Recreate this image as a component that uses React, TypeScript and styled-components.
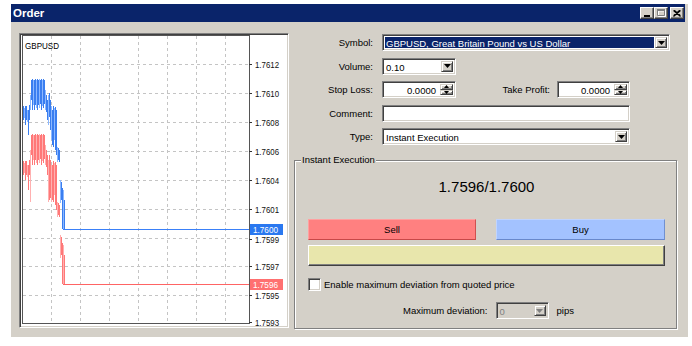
import React from 'react';
import styled, { createGlobalStyle } from 'styled-components';

const GlobalStyle = createGlobalStyle`
  html, body {
    margin: 0;
    padding: 0;
    background: #fff;
  }
  body {
    font-family: "Liberation Sans", Arial, sans-serif;
    font-size: 9.5px;
    color: #000;
  }
`;

// chart data: [top, bottom] per pixel column, starting at x = 23
const askCols: [number, number][] = [
  [106, 120], [108, 118], [106, 125], [106, 120], [110, 122], [110, 135], [105, 120],
  [95, 110], [80, 100], [79, 110], [80, 105], [80, 110], [79, 105], [80, 108],
  [79, 110], [80, 105], [79, 108], [80, 104], [79, 110], [80, 106], [79, 108],
  [80, 104], [90, 110], [95, 112], [100, 120], [95, 125], [93, 117], [100, 130],
  [106, 140], [110, 145], [106, 147], [108, 140], [107, 150], [110, 155], [147, 162],
  [148, 160], [150, 162], [180, 203], [182, 200], [188, 229], [190, 229], [200, 229],
];
const SPREAD = 55;
// bid columns that dip lower than ask + spread
const bidDips: Record<number, [number, number]> = {
  7: [150, 202],
  25: [160, 202],
  26: [155, 200],
  27: [160, 198],
  28: [165, 202],
};

const hGrid = [64.5, 93.5, 122.5, 151.5, 180.5, 209.5, 238.5, 266.5, 295.5];
const vGrid = [51.5, 80.5, 109.5, 138.5, 167.5, 196.5, 225.5];
const axis: [number, string][] = [
  [64.5, '1.7612'], [93.5, '1.7610'], [122.5, '1.7608'], [151.5, '1.7606'],
  [180.5, '1.7604'], [209.5, '1.7601'], [239.5, '1.7599'], [266.5, '1.7597'],
  [295.5, '1.7595'], [322, '1.7593'],
];

const PriceChart = () => (
  <ChartSvg viewBox="21 35 266 291" width={266} height={291}>
    <rect x={21} y={35} width={266} height={291} fill="#fff" />
    {hGrid.map((y) => (
      <line key={'h' + y} x1={23} x2={249} y1={y} y2={y} stroke="#c4c4c4" strokeDasharray="3 3" />
    ))}
    {vGrid.map((x) => (
      <line key={'v' + x} x1={x} x2={x} y1={36} y2={323} stroke="#c4c4c4" strokeDasharray="3 3" />
    ))}
    {askCols.map(([t, b], i) => {
      const [bt, bb] = bidDips[i] || [t + SPREAD, b + SPREAD];
      return (
        <line
          key={'r' + i}
          x1={23.5 + i}
          x2={23.5 + i}
          y1={bt}
          y2={bb}
          stroke={i % 3 === 1 ? '#ffb0b0' : '#ff7878'}
        />
      );
    })}
    {askCols.map(([t, b], i) => (
      <line
        key={'b' + i}
        x1={23.5 + i}
        x2={23.5 + i}
        y1={t}
        y2={b}
        stroke={i % 3 === 1 ? '#8cb8ff' : '#3a7ef0'}
      />
    ))}
    <line x1={63} x2={249} y1={229.5} y2={229.5} stroke="#3a80f8" />
    <line x1={63} x2={249} y1={284.5} y2={284.5} stroke="#ff6464" />
    <rect x={22.5} y={35.5} width={227} height={288} fill="none" stroke="#555" />
    {axis.map(([y, label]) => (
      <g key={label}>
        <line x1={249} x2={252} y1={Math.floor(y) + 0.5} y2={Math.floor(y) + 0.5} stroke="#333" />
        <text x={255} y={y + 3.5} fontSize={9.5} textLength={24} lengthAdjust="spacingAndGlyphs" fill="#111">
          {label}
        </text>
      </g>
    ))}
    <rect x={250} y={224} width={33} height={11} fill="#2a78f0" />
    <text x={253} y={232.5} fontSize={9.5} textLength={25} lengthAdjust="spacingAndGlyphs" fill="#fff">
      1.7600
    </text>
    <rect x={250} y={279} width={33} height={11} fill="#ff7070" />
    <text x={253} y={287.5} fontSize={9.5} textLength={25} lengthAdjust="spacingAndGlyphs" fill="#fff">
      1.7596
    </text>
    <text x={25} y={49} fontSize={9} textLength={34} lengthAdjust="spacingAndGlyphs" fill="#000">
      GBPUSD
    </text>
  </ChartSvg>
);

const DownArrow = ({ color = '#000' }: { color?: string }) => (
  <svg width="7" height="4" viewBox="0 0 7 4">
    <path d="M0 0h7L3.5 4z" fill={color} />
  </svg>
);

const SpinArrow = ({ up }: { up?: boolean }) => (
  <svg width="5" height="3" viewBox="0 0 5 3">
    <path d={up ? 'M2.5 0L5 3H0z' : 'M0 0h5L2.5 3z'} fill="#000" />
  </svg>
);

const Combo = ({ w, value, selected, disabled }: { w: number; value: string; selected?: boolean; disabled?: boolean }) => (
  <Sunken $w={w} $disabled={disabled}>
    <FieldText $selected={selected} $disabled={disabled}>{value}</FieldText>
    <DropButton>
      <DownArrow color={disabled ? '#808080' : '#000'} />
    </DropButton>
  </Sunken>
);

const Spinner = ({ w, value }: { w: number; value: string }) => (
  <Sunken $w={w}>
    <FieldText $right>{value}</FieldText>
    <SpinColumn>
      <SpinButton>
        <SpinArrow up />
      </SpinButton>
      <SpinButton>
        <SpinArrow />
      </SpinButton>
    </SpinColumn>
  </Sunken>
);

const App = (): JSX.Element => {
  return (
    <Page>
      <GlobalStyle />
      <Window>
        <TitleBar>
          <Title>Order</Title>
          <CaptionButtons>
            <CaptionButton>
              <svg width="6" height="8" viewBox="0 0 6 8">
                <rect x="0" y="6" width="6" height="2" fill="#000" />
              </svg>
            </CaptionButton>
            <CaptionButton>
              <svg width="9" height="8" viewBox="0 0 9 8">
                <path d="M1.5 1.5h7v6h-7z M1 1h8v1H1z" fill="none" stroke="#fff" strokeWidth="1" />
                <path d="M0.5 0.5h7v6h-7z" fill="none" stroke="#808080" strokeWidth="1" />
                <rect x="0" y="0" width="8" height="2" fill="#808080" />
              </svg>
            </CaptionButton>
            <CaptionButton $gap={2}>
              <svg width="8" height="7" viewBox="0 0 8 7">
                <path d="M0.5 0.5L7.5 6.5M1.5 0.5L7.5 5.7M7.5 0.5L0.5 6.5M6.5 0.5L0.5 5.7" stroke="#000" strokeWidth="1.1" />
              </svg>
            </CaptionButton>
          </CaptionButtons>
        </TitleBar>
        <Body>
          <ChartFrame>
            <PriceChart />
          </ChartFrame>
          <Panel>
            <Form>
              <Label>Symbol:</Label>
              <Combo w={288} value="GBPUSD, Great Britain Pound vs US Dollar" selected />
              <Label>Volume:</Label>
              <Combo w={74} value="0.10" />
              <Label>Stop Loss:</Label>
              <InlineRow>
                <Spinner w={74} value="0.0000" />
                <InlineLabel>Take Profit:</InlineLabel>
                <Spinner w={73} value="0.0000" />
              </InlineRow>
              <Label>Comment:</Label>
              <Sunken $w={248} />
              <Label>Type:</Label>
              <Combo w={248} value="Instant Execution" />
            </Form>
            <Group>
              <Legend>Instant Execution</Legend>
              <GroupBody>
                <Quote>1.7596/1.7600</Quote>
                <TradeRow>
                  <TradeButton $kind="sell">Sell</TradeButton>
                  <TradeButton $kind="buy">Buy</TradeButton>
                </TradeRow>
                <StatusBar />
                <CheckRow>
                  <CheckBox />
                  <span>Enable maximum deviation from quoted price</span>
                </CheckRow>
                <DeviationRow>
                  <span>Maximum deviation:</span>
                  <Combo w={53} value="0" disabled />
                  <span>pips</span>
                </DeviationRow>
              </GroupBody>
            </Group>
          </Panel>
        </Body>
      </Window>
    </Page>
  );
};

const Page = styled.div`
  padding: 4px 0 0 11px;
`;

const Window = styled.div`
  width: 677px;
  height: 333px;
  background: #d4d0c8;
  display: flex;
  flex-direction: column;
`;

const TitleBar = styled.div`
  height: 18px;
  margin-right: 3px;
  background: #0a246a;
  display: flex;
  align-items: center;
  justify-content: space-between;
  padding: 0 1px 0 2px;
`;

const Title = styled.span`
  color: #fff;
  font-weight: bold;
  font-size: 11.5px;
`;

const CaptionButtons = styled.div`
  display: flex;
  align-items: center;
`;

const CaptionButton = styled.div<{ $gap?: number }>`
  width: 14px;
  height: 12px;
  box-sizing: border-box;
  margin-left: ${({ $gap }) => $gap || 0}px;
  background: #d4d0c8;
  border: 1px solid;
  border-color: #fff #404040 #404040 #fff;
  box-shadow: inset -1px -1px #808080;
  display: flex;
  align-items: center;
  justify-content: center;
`;

const Body = styled.div`
  display: flex;
  gap: 5px;
  padding: 11px 0 0 8px;
`;

const sunkenBorder = `
  border: 1px solid;
  border-color: #808080 #fff #fff #808080;
  box-shadow: inset 1px 1px #404040, inset -1px -1px #d4d0c8;
`;

const raisedBorder = `
  background: #d4d0c8;
  border: 1px solid;
  border-color: #d4d0c8 #404040 #404040 #d4d0c8;
  box-shadow: inset 1px 1px #fff, inset -1px -1px #808080;
`;

const ChartFrame = styled.div`
  width: 270px;
  height: 295px;
  box-sizing: border-box;
  ${sunkenBorder}
  padding: 1px;
`;

const ChartSvg = styled.svg`
  display: block;
  font-family: "Liberation Sans", Arial, sans-serif;
`;

const Panel = styled.div`
  width: 383px;
  padding-top: 1px;
  display: flex;
  flex-direction: column;
`;

const Form = styled.div`
  display: grid;
  grid-template-columns: 79px auto;
  grid-auto-rows: 17px;
  column-gap: 9px;
  row-gap: 6.5px;
  align-items: center;
  justify-items: start;
`;

const Label = styled.span`
  justify-self: end;
  line-height: 17px;
`;

const InlineRow = styled.div`
  display: flex;
  align-items: center;
`;

const InlineLabel = styled.span`
  width: 101px;
  box-sizing: border-box;
  padding-right: 7px;
  text-align: right;
`;

const Sunken = styled.div<{ $w: number; $disabled?: boolean }>`
  width: ${({ $w }) => $w}px;
  height: 17px;
  box-sizing: border-box;
  background: ${({ $disabled }) => ($disabled ? '#d4d0c8' : '#fff')};
  ${sunkenBorder}
  padding: 2px;
  display: flex;
  align-items: stretch;
`;

const FieldText = styled.span<{ $selected?: boolean; $right?: boolean; $disabled?: boolean }>`
  flex: 1;
  min-width: 0;
  white-space: nowrap;
  overflow: hidden;
  line-height: 13px;
  padding: 0 ${({ $right }) => ($right ? '4px' : '1px')} 0 1px;
  text-align: ${({ $right }) => ($right ? 'right' : 'left')};
  background: ${({ $selected }) => ($selected ? '#0a246a' : 'transparent')};
  color: ${({ $selected, $disabled }) => ($selected ? '#fff' : $disabled ? '#808080' : '#000')};
  margin-right: ${({ $selected }) => ($selected ? '1px' : '0')};
`;

const DropButton = styled.div`
  width: 12px;
  box-sizing: border-box;
  ${raisedBorder}
  display: flex;
  align-items: center;
  justify-content: center;
`;

const SpinColumn = styled.div`
  width: 13px;
  display: flex;
  flex-direction: column;
`;

const SpinButton = styled.div`
  flex: 1;
  box-sizing: border-box;
  ${raisedBorder}
  display: flex;
  align-items: center;
  justify-content: center;
`;

const Group = styled.fieldset`
  margin: 9px 0 0;
  padding: 0 4px 9px 6px;
  min-width: 0;
  border: 1px solid #808080;
  box-shadow: inset 1px 1px #fff, 1px 1px #fff;
`;

const Legend = styled.legend`
  padding: 0 1px;
  line-height: 12px;
  background: #d4d0c8;
`;

const GroupBody = styled.div`
  display: flex;
  flex-direction: column;
  padding: 0 7px;
`;

const Quote = styled.div`
  margin-top: 12px;
  text-align: center;
  font-size: 15px;
  line-height: 18px;
`;

const TradeRow = styled.div`
  margin-top: 23px;
  display: grid;
  grid-template-columns: 168px 169px;
  column-gap: 20px;
`;

const TradeButton = styled.div<{ $kind: 'sell' | 'buy' }>`
  height: 21px;
  box-sizing: border-box;
  display: flex;
  align-items: center;
  justify-content: center;
  background: ${({ $kind }) => ($kind === 'sell' ? '#ff8080' : '#a3c2ff')};
  border: 1px solid;
  border-color: ${({ $kind }) =>
    $kind === 'sell' ? '#ffa0a0 #d05050 #c84848 #ffa0a0' : '#c0d4ff #7090d0 #6888cc #c0d4ff'};
`;

const StatusBar = styled.div`
  margin-top: 5px;
  height: 21px;
  box-sizing: border-box;
  background: #e8e6ac;
  border: 1px solid;
  border-color: #fff #404040 #404040 #fff;
  box-shadow: inset -1px -1px #808080;
`;

const CheckRow = styled.div`
  margin-top: 12px;
  display: flex;
  align-items: center;
  gap: 3px;
  height: 13px;
`;

const CheckBox = styled.div`
  width: 13px;
  height: 13px;
  box-sizing: border-box;
  background: #fff;
  ${sunkenBorder}
`;

const DeviationRow = styled.div`
  margin-top: 11px;
  display: flex;
  align-items: center;
  justify-content: center;
  gap: 8px;
  padding-left: 4px;
`;

export default App;
